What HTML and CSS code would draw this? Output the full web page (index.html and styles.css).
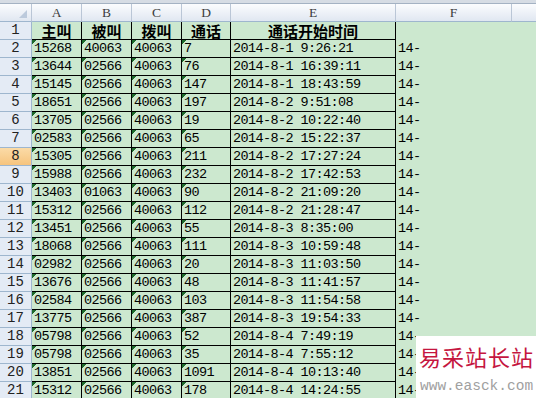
FILE: index.html
```html
<!DOCTYPE html>
<html lang="zh-CN">
<head>
<meta charset="utf-8">
<title>Sheet</title>
<link rel="stylesheet" href="styles.css">
</head>
<body>
<div class="topbar"></div>
<div class="sheet">
  <div class="c hd corner"><svg width="32" height="17" viewBox="0 0 32 17"><polygon points="19,14 27,6 27,14" fill="#bccadc"/></svg></div>
  <div class="c hd">A</div><div class="c hd">B</div><div class="c hd">C</div><div class="c hd">D</div><div class="c hd">E</div><div class="c hd">F</div><div class="c hd last"></div>

  <div class="c rh">1</div><div class="c d ttl">主叫</div><div class="c d ttl">被叫</div><div class="c d ttl">拨叫</div><div class="c d ttl">通话</div><div class="c d ttl">通话开始时间</div><div class="c f"></div><div class="c f"></div>

  <div class="c rh">2</div><div class="c d tx">15268</div><div class="c d tx">40063</div><div class="c d tx">40063</div><div class="c d tx">7</div><div class="c d">2014-8-1 9:26:21</div><div class="c f">14-</div><div class="c f"></div>
  <div class="c rh">3</div><div class="c d tx">13644</div><div class="c d tx">02566</div><div class="c d tx">40063</div><div class="c d tx">76</div><div class="c d">2014-8-1 16:39:11</div><div class="c f">14-</div><div class="c f"></div>
  <div class="c rh">4</div><div class="c d tx">15145</div><div class="c d tx">02566</div><div class="c d tx">40063</div><div class="c d tx">147</div><div class="c d">2014-8-1 18:43:59</div><div class="c f">14-</div><div class="c f"></div>
  <div class="c rh">5</div><div class="c d tx">18651</div><div class="c d tx">02566</div><div class="c d tx">40063</div><div class="c d tx">197</div><div class="c d">2014-8-2 9:51:08</div><div class="c f">14-</div><div class="c f"></div>
  <div class="c rh">6</div><div class="c d tx">13705</div><div class="c d tx">02566</div><div class="c d tx">40063</div><div class="c d tx">19</div><div class="c d">2014-8-2 10:22:40</div><div class="c f">14-</div><div class="c f"></div>
  <div class="c rh">7</div><div class="c d tx">02583</div><div class="c d tx">02566</div><div class="c d tx">40063</div><div class="c d tx">65</div><div class="c d">2014-8-2 15:22:37</div><div class="c f">14-</div><div class="c f"></div>
  <div class="c rh sel">8</div><div class="c d tx">15305</div><div class="c d tx">02566</div><div class="c d tx">40063</div><div class="c d tx">211</div><div class="c d">2014-8-2 17:27:24</div><div class="c f">14-</div><div class="c f"></div>
  <div class="c rh">9</div><div class="c d tx">15988</div><div class="c d tx">02566</div><div class="c d tx">40063</div><div class="c d tx">232</div><div class="c d">2014-8-2 17:42:53</div><div class="c f">14-</div><div class="c f"></div>
  <div class="c rh">10</div><div class="c d tx">13403</div><div class="c d tx">01063</div><div class="c d tx">40063</div><div class="c d tx">90</div><div class="c d">2014-8-2 21:09:20</div><div class="c f">14-</div><div class="c f"></div>
  <div class="c rh">11</div><div class="c d tx">15312</div><div class="c d tx">02566</div><div class="c d tx">40063</div><div class="c d tx">112</div><div class="c d">2014-8-2 21:28:47</div><div class="c f">14-</div><div class="c f"></div>
  <div class="c rh">12</div><div class="c d tx">13451</div><div class="c d tx">02566</div><div class="c d tx">40063</div><div class="c d tx">55</div><div class="c d">2014-8-3 8:35:00</div><div class="c f">14-</div><div class="c f"></div>
  <div class="c rh">13</div><div class="c d tx">18068</div><div class="c d tx">02566</div><div class="c d tx">40063</div><div class="c d tx">111</div><div class="c d">2014-8-3 10:59:48</div><div class="c f">14-</div><div class="c f"></div>
  <div class="c rh">14</div><div class="c d tx">02982</div><div class="c d tx">02566</div><div class="c d tx">40063</div><div class="c d tx">20</div><div class="c d">2014-8-3 11:03:50</div><div class="c f">14-</div><div class="c f"></div>
  <div class="c rh">15</div><div class="c d tx">13676</div><div class="c d tx">02566</div><div class="c d tx">40063</div><div class="c d tx">48</div><div class="c d">2014-8-3 11:41:57</div><div class="c f">14-</div><div class="c f"></div>
  <div class="c rh">16</div><div class="c d tx">02584</div><div class="c d tx">02566</div><div class="c d tx">40063</div><div class="c d tx">103</div><div class="c d">2014-8-3 11:54:58</div><div class="c f">14-</div><div class="c f"></div>
  <div class="c rh">17</div><div class="c d tx">13775</div><div class="c d tx">02566</div><div class="c d tx">40063</div><div class="c d tx">387</div><div class="c d">2014-8-3 19:54:33</div><div class="c f">14-</div><div class="c f"></div>
  <div class="c rh">18</div><div class="c d tx">05798</div><div class="c d tx">02566</div><div class="c d tx">40063</div><div class="c d tx">52</div><div class="c d">2014-8-4 7:49:19</div><div class="c f">14-</div><div class="c f"></div>
  <div class="c rh">19</div><div class="c d tx">05798</div><div class="c d tx">02566</div><div class="c d tx">40063</div><div class="c d tx">35</div><div class="c d">2014-8-4 7:55:12</div><div class="c f">14-</div><div class="c f"></div>
  <div class="c rh">20</div><div class="c d tx">13851</div><div class="c d tx">02566</div><div class="c d tx">40063</div><div class="c d tx">1091</div><div class="c d">2014-8-4 10:13:40</div><div class="c f">14-</div><div class="c f"></div>
  <div class="c rh">21</div><div class="c d tx">15312</div><div class="c d tx">02566</div><div class="c d tx">40063</div><div class="c d tx">178</div><div class="c d">2014-8-4 14:24:55</div><div class="c f">14-</div><div class="c f"></div>
</div>
<div class="mark">
  <div class="mark-cn">易采站长站</div>
  <div class="mark-url">www.easck.com</div>
</div>
</body>
</html>
```

FILE: styles.css
```css
html, body {
  margin: 0;
  padding: 0;
}
body {
  width: 536px;
  height: 398px;
  overflow: hidden;
  background: #cce8cf;
  font-family: "Liberation Mono", monospace;
  color: #000;
}
.topbar {
  height: 4px;
  box-sizing: border-box;
  background: #d6dce4;
  border-bottom: 1px solid #a4b2c3;
}
.sheet {
  display: grid;
  grid-template-columns: 32px 50px 50px 50px 49px 165px 116px 1fr;
  grid-auto-rows: 18px;
}
.c {
  box-sizing: border-box;
  overflow: hidden;
  white-space: nowrap;
  line-height: 17px;
}
.hd {
  background: linear-gradient(#fbfcfe, #e0e7f1);
  border-right: 1px solid #bac6d6;
  border-bottom: 1px solid #9eb6ce;
  text-align: center;
  font-family: "Liberation Serif", serif;
  font-size: 13.5px;
  color: #3d3d3d;
}
.corner {
  line-height: 0;
}
.hd.last {
  border-right: none;
}
.rh {
  background: #e4ebf5;
  border-right: 1px solid #9eb6ce;
  border-bottom: 1px solid #9eb6ce;
  text-align: center;
  font-size: 14px;
  color: #222;
}
.rh.sel {
  background: linear-gradient(#fbdba7, #f6c47e);
}
.d {
  border-right: 1px solid #000;
  border-bottom: 1px solid #000;
  padding-left: 2px;
  font-size: 13.5px;
  letter-spacing: -0.6px;
}
.tx {
  background: linear-gradient(135deg, #1d6a2b 3.5px, transparent 3.5px);
}
.ttl {
  overflow: visible;
  padding-left: 0;
  text-align: center;
  letter-spacing: 0;
  font-family: "Noto Sans CJK SC", sans-serif;
  font-weight: 700;
  font-size: 15px;
}
.f {
  padding-left: 2px;
  font-size: 13.5px;
  letter-spacing: -0.6px;
}
.mark {
  position: absolute;
  left: 416px;
  top: 336px;
  width: 120px;
  height: 62px;
  background: #fff;
  overflow: hidden;
}
.mark-cn {
  margin: 6px 0 0 3px;
  font-family: "Noto Sans CJK SC", sans-serif;
  font-size: 22px;
  line-height: 28px;
  letter-spacing: 1px;
  color: #c5163f;
  white-space: nowrap;
}
.mark-url {
  margin: 8px 0 0 4px;
  font-family: "Liberation Mono", monospace;
  font-size: 14.5px;
  line-height: 16px;
  color: #a0a0a0;
  white-space: nowrap;
}
```
